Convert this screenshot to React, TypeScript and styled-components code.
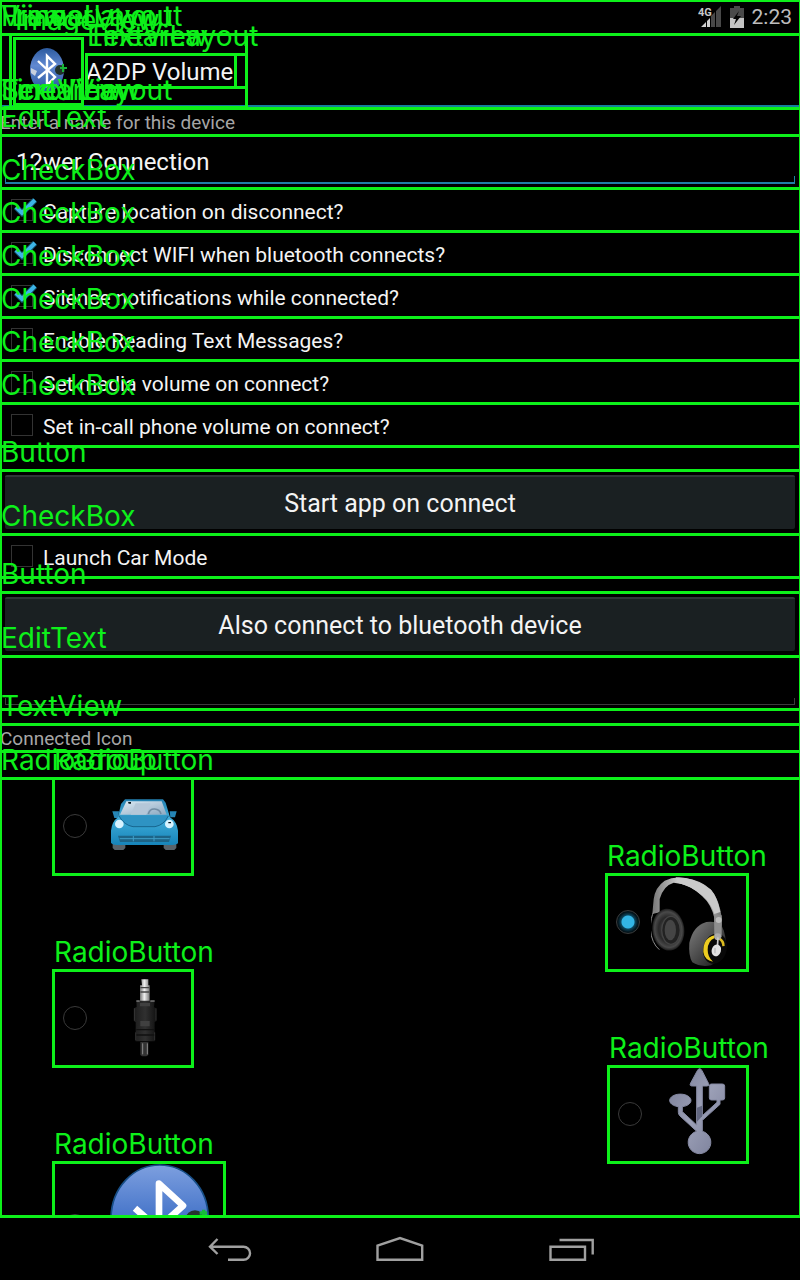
import React, { useState } from "react";
import styled, { createGlobalStyle, css } from "styled-components";

const GREEN = "#0df01a";

const GlobalStyle = createGlobalStyle`
  * { box-sizing: border-box; }
  body { margin: 0; background: #000; color: #f4f4f4; font-family: Roboto, "Liberation Sans", sans-serif; }
  button, input { font-family: inherit; }
`;

const outlined = css`
  position: relative;
  &::after {
    content: "";
    position: absolute;
    inset: -1px -2px -2px -1px;
    border: 3px solid ${GREEN};
    pointer-events: none;
    z-index: 2;
  }
`;

const Tag = styled.span`
  position: absolute;
  left: 1px;
  bottom: calc(100% + 4px);
  z-index: 3;
  color: ${GREEN};
  font-family: Inter, sans-serif;
  font-size: 28px;
  font-weight: 400;
  line-height: 28px;
  white-space: nowrap;
  pointer-events: none;
`;

const Shell = styled.div`
  display: flex;
  flex-direction: column;
  height: 100vh;
  min-height: 640px;
`;

const Screen = styled.div`
  ${outlined}
  flex: 1;
  min-height: 0;
  overflow: hidden;
  &::after { inset: -1px -2px 0 -1px; }
`;

const StatusBar = styled.header`
  display: flex;
  justify-content: flex-end;
  align-items: center;
  gap: 8px;
  height: 34px;
  padding-right: 8px;
  color: #bdbdbd;
`;

const Clock = styled.time`
  font-size: 21px;
  line-height: 36px;
`;

const ActionBar = styled.div`
  ${outlined}
  height: 74px;
  padding-left: 10px;
  box-shadow: inset 0 -3px #14809c;
`;

const HomeBlock = styled.div`
  ${outlined}
  display: inline-flex;
  align-items: center;
  height: 73px;
  padding-left: 4px;
`;

const AppIcon = styled.div`
  ${outlined}
  width: 68px;
  height: 66px;
  margin-right: 4px;
  svg { display: block; }
`;

const TitleColumn = styled.div`
  ${outlined}
  width: 160px;
  height: 33px;
`;

const Title = styled.h1`
  ${outlined}
  margin: 0;
  width: 149px;
  height: 33px;
  font-size: 24px;
  font-weight: 400;
  line-height: 36px;
  white-space: nowrap;
`;

const Form = styled.form`
  ${outlined}
  display: flex;
  flex-direction: column;
`;

const Caption = styled.label`
  ${outlined}
  display: block;
  height: 27px;
  color: #a6a6a6;
  font-size: 19px;
  line-height: 30px;
`;

const Field = styled.div<{ $active?: boolean }>`
  ${outlined}
  height: 53px;
  &::before {
    content: "";
    position: absolute;
    left: 5px;
    right: 5px;
    bottom: 4px;
    height: 6px;
    border: 1px solid ${(p) => (p.$active ? "#1f7fa6" : "#3c3c3c")};
    border-bottom-width: ${(p) => (p.$active ? 2 : 1)}px;
    border-top: 0;
    pointer-events: none;
  }
`;

const TextBox = styled.input`
  display: block;
  width: 100%;
  height: 52px;
  padding: 2px 16px 0;
  border: 0;
  outline: 0;
  background: transparent;
  color: #f4f4f4;
  font-size: 24px;
`;

const CheckRow = styled.label`
  ${outlined}
  display: flex;
  align-items: center;
  height: 43px;
  padding-left: 11px;
  font-size: 21px;
`;

const CheckInput = styled.input`
  appearance: none;
  width: 22px;
  height: 22px;
  margin: 0 10px 0 0;
  border: 1px solid #333;
`;

const CheckText = styled.span`
  padding-top: 4px;
  line-height: 24px;
`;

const Tick = styled.svg`
  position: absolute;
  left: 11px;
  top: 7px;
  pointer-events: none;
`;

const Gap = styled.div<{ $size: number }>`
  height: ${(p) => p.$size}px;
`;

const ButtonSlot = styled.div`
  ${outlined}
  height: 64px;
  padding: 5px;
`;

const WideButton = styled.button`
  display: block;
  width: 100%;
  height: 54px;
  padding: 0;
  border: 0;
  border-top: 2px solid #303638;
  border-radius: 2px;
  background: #1a2022;
  color: #f4f4f4;
  font-size: 25px;
`;

const RadioGroup = styled.div`
  ${outlined}
  display: flex;
  flex-direction: column;
  padding: 0 53px;
`;

const RadioBox = styled.label<{ $end?: boolean; $width: number }>`
  ${outlined}
  display: flex;
  align-items: center;
  justify-content: space-between;
  align-self: ${(p) => (p.$end ? "flex-end" : "flex-start")};
  width: ${(p) => p.$width}px;
  padding-left: 10px;
  svg { display: block; }
`;

const RadioInput = styled.input`
  appearance: none;
  flex: none;
  width: 24px;
  height: 24px;
  margin: 0;
  border: 1px solid #3a3a3a;
  border-radius: 50%;
  &:checked {
    background: radial-gradient(circle, #33b5e5 0 6px, #0d455c 7px, #04141b 10px);
  }
`;

const NavBar = styled.nav`
  display: flex;
  justify-content: center;
  flex: none;
  height: 62px;
`;

const NavButton = styled.button`
  display: flex;
  align-items: center;
  justify-content: center;
  width: 171px;
  padding: 0;
  border: 0;
  background: transparent;
  color: #a0a0a0;
`;

const SignalIcon = () => (
  <svg width="24" height="24" viewBox="0 0 24 24" aria-label="4G signal">
    <path d="M3 22L8 17V22Z M9 22V16L12 13V22Z" fill="#d0d0d0" />
    <path d="M13 22V11L17 7V22Z M18 22V6L23 1V22Z" fill="#484848" />
    <text x="0" y="11" fontFamily="Roboto" fontSize="11" fontWeight="700" fill="#c8c8c8">4G</text>
  </svg>
);

const BatteryIcon = () => (
  <svg width="14" height="22" viewBox="0 0 14 22" aria-label="Battery charging">
    <path d="M4 0H10V2H14V12H0V2H4Z" fill="#4a4a4a" />
    <path d="M0 12H14V22H0Z" fill="#c4c4c4" />
    <path d="M9 5L3 13H6L4 19L11 10H7Z" fill="#050505" />
  </svg>
);

const AppLogo = () => (
  <svg width="68" height="66" viewBox="14 38 68 66" aria-hidden="true">
    <defs>
      <linearGradient id="appBlue" x1="0" y1="0" x2="0" y2="1">
        <stop offset="0" stopColor="#2c5a9e" />
        <stop offset="0.4" stopColor="#6189d2" />
        <stop offset="1" stopColor="#24529a" />
      </linearGradient>
    </defs>
    <ellipse cx="47" cy="70" rx="17" ry="22" fill="url(#appBlue)" />
    <path d="M31 68L37 71L35 76L31 73Z" fill="#c7d0de" />
    <ellipse cx="60" cy="70" rx="5" ry="5" fill="#23302b" />
    <path d="M38 61L55 77L47 85V56L55 64L38 78" fill="none" stroke="#fff" strokeWidth="2.4" />
    <path d="M60 68H67M63 64V72" stroke="#19b43a" strokeWidth="2" />
  </svg>
);

const CarIcon = () => (
  <svg width="96" height="96" viewBox="291 414 288 288" aria-hidden="true">
    <defs>
      <linearGradient id="carBody" x1="0" y1="0" x2="0" y2="1">
        <stop offset="0" stopColor="#237fb0" />
        <stop offset="0.4" stopColor="#41add9" />
        <stop offset="1" stopColor="#1684b9" />
      </linearGradient>
      <linearGradient id="carGlass" x1="0" y1="0" x2="1" y2="1">
        <stop offset="0" stopColor="#dce9f3" />
        <stop offset="1" stopColor="#8da9c1" />
      </linearGradient>
    </defs>
    <path d="M341 606H379V624L373 630H347L341 624Z M494 606H532V624L526 630H500L494 624Z" fill="#59636a" />
    <path d="M340 514H360L358 534H346Z M512 514H533L528 532H514Z" fill="#2585b5" />
    <path d="M378 478H492L500 488L513 532Q534 545 537 572V610Q530 616 518 615H355Q342 616 336 609V572Q339 544 357 532L366 492Z" fill="url(#carBody)" />
    <path d="M382 484H488L503 524H363Z" fill="url(#carGlass)" />
    <path d="M410 490H455L442 524H395Z" fill="#b5c7d8" />
    <path d="M448 522Q452 506 467 507Q482 508 486 522" fill="none" stroke="#718ca3" strokeWidth="5" />
    <path d="M359 526H509Q496 556 469 560H400Q374 556 359 526Z" fill="#2e93c3" />
    <path d="M360 528Q376 556 402 560H468Q495 555 508 528" fill="none" stroke="#17658f" strokeWidth="3" />
    <circle cx="361" cy="552" r="13" fill="#d8f3ff" />
    <circle cx="511" cy="552" r="13" fill="#d8f3ff" />
    <path d="M357 587H516L510 606H363Z" fill="#1d6487" />
    <path d="M362 596H512M403 588V604M465 588V604" stroke="#3f9ec8" strokeWidth="3" />
    <path d="M387 486H396V491H389Z M508 546H516V550H508Z" fill="#07151d" />
  </svg>
);

const HeadphonesIcon = () => (
  <svg width="96" height="96" viewBox="156 102 288 288" aria-hidden="true">
    <defs>
      <linearGradient id="band" x1="0" y1="0" x2="1" y2="0">
        <stop offset="0" stopColor="#777" />
        <stop offset="0.4" stopColor="#d2d2d2" />
        <stop offset="0.8" stopColor="#b0b0b0" />
        <stop offset="1" stopColor="#777" />
      </linearGradient>
      <radialGradient id="cup">
        <stop offset="0" stopColor="#555" />
        <stop offset="0.6" stopColor="#292929" />
        <stop offset="0.85" stopColor="#494949" />
        <stop offset="1" stopColor="#1b1b1b" />
      </radialGradient>
      <linearGradient id="shell" x1="0" y1="0" x2="1" y2="1">
        <stop offset="0" stopColor="#808080" />
        <stop offset="0.5" stopColor="#4a4a4a" />
        <stop offset="1" stopColor="#111" />
      </linearGradient>
    </defs>
    <path d="M160 222L164 178Q168 142 197 122Q225 108 258 114Q305 120 336 149Q361 177 369 237L367 292L347 290V238Q338 193 309 168Q272 131 224 128Q193 137 182 177V217Z" fill="url(#band)" />
    <path d="M230 112Q290 112 336 149Q356 172 364 216L346 222Q334 186 309 166Q276 138 236 128Z" fill="#cacaca" />
    <path d="M166 212Q154 232 154 268Q158 310 181 329" fill="none" stroke="#8a8a8a" strokeWidth="3" />
    <ellipse cx="208" cy="269" rx="48" ry="63" fill="url(#cup)" transform="rotate(-7 208 269)" />
    <ellipse cx="216" cy="271" rx="28" ry="42" fill="#222" stroke="#444" strokeWidth="4" />
    <ellipse cx="214" cy="270" rx="17" ry="31" fill="#454545" />
    <path d="M322 246Q282 257 271 309Q268 348 280 367Q303 382 336 376Q369 362 380 322Q383 286 368 257Q350 242 322 246Z" fill="url(#shell)" />
    <ellipse cx="348" cy="326" rx="35" ry="46" fill="#080808" transform="rotate(15 348 326)" />
    <path d="M347 286Q312 293 313 336Q317 361 342 365Q326 351 326 329Q326 303 347 294Z" fill="#edcd21" />
    <path d="M361 291Q379 302 377 318L370 319Q369 304 359 299Z" fill="#dcbb20" />
    <path d="M345 226H368V292H346Z" fill="#8e8e8e" />
    <circle cx="359" cy="240" r="9" fill="#bbb" />
    <circle cx="356" cy="290" r="10" fill="#aaa" />
    <path d="M357 292L355 326" stroke="#c8c8c8" strokeWidth="5" />
    <ellipse cx="352" cy="331" rx="14" ry="18" fill="#e2e2e2" transform="rotate(18 352 331)" />
    <path d="M348 324V340" stroke="#bbb" strokeWidth="4" />
  </svg>
);

const JackIcon = () => (
  <svg width="96" height="96" viewBox="171 123 288 288" aria-hidden="true">
    <defs>
      <linearGradient id="metal" x1="0" y1="0" x2="1" y2="0">
        <stop offset="0" stopColor="#777" />
        <stop offset="0.45" stopColor="#f0f0f0" />
        <stop offset="1" stopColor="#777" />
      </linearGradient>
      <linearGradient id="sleeve" x1="0" y1="0" x2="1" y2="0">
        <stop offset="0" stopColor="#1c1c1c" />
        <stop offset="0.5" stopColor="#303030" />
        <stop offset="1" stopColor="#111" />
      </linearGradient>
    </defs>
    <path d="M307 151H328V169H332V216H303V169H309Z" fill="url(#metal)" />
    <path d="M304 176H331M304 189H331" stroke="#444" strokeWidth="4" />
    <path d="M292 215H347L345 235L352 238V276L347 280V337H290V280L285 276V238L293 234Z" fill="url(#sleeve)" />
    <path d="M292 216H302M334 216H347" stroke="#aaa" strokeWidth="3" />
    <path d="M303 222H333V232H303Z M304 276H332V292H304Z" fill="#404040" />
    <path d="M286 238V275M351 238V275M290 310V334M347 310V334" stroke="#444" strokeWidth="2" />
    <path d="M292 302H346M292 318H346" stroke="#111" strokeWidth="4" />
    <path d="M304 339H328V378L322 382H309L304 378Z" fill="#333" />
    <path d="M311 343V376M325 343V376" stroke="#8a8a8a" strokeWidth="3" />
  </svg>
);

const UsbIcon = () => (
  <svg width="96" height="96" viewBox="156 111 288 288" aria-hidden="true">
    <defs>
      <linearGradient id="usb" x1="0" y1="0" x2="1" y2="1">
        <stop offset="0" stopColor="#777b94" />
        <stop offset="0.5" stopColor="#9b9fb6" />
        <stop offset="1" stopColor="#777c97" />
      </linearGradient>
    </defs>
    <path d="M302 119Q306 119 309 125L329 164Q332 171 324 171H310V260L354 220V213H337Q331 213 331 207V171Q331 165 337 165H370Q377 165 377 171V207Q377 213 370 213H363V226L310 274V307A34 34 0 1 1 293 307L243 261Q238 256 238 250V233A32 19 0 1 1 250 233V248L293 288V171H280Q270 171 275 162L295 125Q298 119 302 119Z" fill="url(#usb)" stroke="#8589a2" strokeWidth="3" />
    <path d="M294 236L309 230V262L294 278Z" fill="#626780" />
  </svg>
);

const BluetoothIcon = () => (
  <svg width="128" height="128" viewBox="171 129 384 384" aria-hidden="true">
    <defs>
      <linearGradient id="btBlue" x1="0" y1="0" x2="0" y2="1">
        <stop offset="0" stopColor="#7d9fdf" />
        <stop offset="0.4" stopColor="#4a78cb" />
        <stop offset="1" stopColor="#1f4d9c" />
      </linearGradient>
    </defs>
    <path d="M362 138C440 138 508 205 508 300C508 430 440 500 362 500S216 430 216 300C216 205 285 138 362 138Z" fill="url(#btBlue)" stroke="#174e86" strokeWidth="5" />
    <path d="M288 268L428 390L360 450V194L432 260L288 390" fill="none" stroke="#fff" strokeWidth="20" strokeLinejoin="round" />
    <ellipse cx="468" cy="300" rx="28" ry="26" fill="#26332f" />
    <path d="M494 272V300M482 282H504" stroke="#18b93c" strokeWidth="10" />
  </svg>
);

const BackIcon = () => (
  <svg width="48" height="32" viewBox="205 1233 48 32" fill="none" stroke="currentColor" strokeWidth="2.4" aria-hidden="true">
    <path d="M217.5 1239L210 1246.7L217.5 1254M210 1246.7H243.5A6.5 6.5 0 0 1 243.5 1259.8H228" />
  </svg>
);

const HomeIcon = () => (
  <svg width="48" height="32" viewBox="376 1233 48 32" fill="none" stroke="currentColor" strokeWidth="2.4" aria-hidden="true">
    <path d="M377.5 1259.8V1245.5L400 1238L422.2 1245.5V1259.8Z" />
  </svg>
);

const RecentsIcon = () => (
  <svg width="48" height="32" viewBox="547 1233 48 32" fill="none" stroke="currentColor" strokeWidth="2.4" aria-hidden="true">
    <path d="M550.5 1246.7H585V1259.8H550.5Z M559.5 1240H592.7V1254.5" />
  </svg>
);

const Label = ({ children }: { children: string }) => <Tag aria-hidden="true">{children}</Tag>;

function CheckOption({ text, initial = false }: { text: string; initial?: boolean }) {
  const [on, setOn] = useState(initial);
  return (
    <CheckRow>
      <Label>CheckBox</Label>
      <CheckInput type="checkbox" checked={on} onChange={() => setOn(!on)} />
      {on && (
        <Tick width="28" height="24" viewBox="0 0 28 24" aria-hidden="true">
          <path d="M5 12L11 18L24 5" fill="none" stroke="#0f4d66" strokeWidth="6" />
          <path d="M5 12L11 18L24 5" fill="none" stroke="#3db4e6" strokeWidth="4" />
        </Tick>
      )}
      <CheckText>{text}</CheckText>
    </CheckRow>
  );
}

const ICONS = [
  { id: "Car", icon: <CarIcon />, width: 139, end: false },
  { id: "Headphones", icon: <HeadphonesIcon />, width: 141, end: true },
  { id: "Audio jack", icon: <JackIcon />, width: 139, end: false },
  { id: "USB", icon: <UsbIcon />, width: 139, end: true },
  { id: "Bluetooth", icon: <BluetoothIcon />, width: 171, end: false },
];

export default function App() {
  const [name, setName] = useState("12wer Connection");
  const [device, setDevice] = useState("");
  const [icon, setIcon] = useState("Headphones");

  return (
    <Shell>
      <GlobalStyle />
      <Screen>
        <StatusBar>
          <SignalIcon />
          <BatteryIcon />
          <Clock>2:23</Clock>
        </StatusBar>
        <ActionBar>
          <Label>FrameLayout</Label>
          <Label>View</Label>
          <HomeBlock>
            <Label>LinearLayout</Label>
            <AppIcon>
              <Label>ImageView</Label>
              <AppLogo />
            </AppIcon>
            <TitleColumn>
              <Label>LinearLayout</Label>
              <Title>
                <Label>TextView</Label>
                A2DP Volume
              </Title>
            </TitleColumn>
          </HomeBlock>
        </ActionBar>
        <Form onSubmit={(e) => e.preventDefault()}>
          <Label>LinearLayout</Label>
          <Label>ScrollView</Label>
          <Caption htmlFor="device-name">
            <Label>TextView</Label>
            Enter a name for this device
          </Caption>
          <Field $active>
            <Label>EditText</Label>
            <TextBox id="device-name" value={name} onChange={(e) => setName(e.target.value)} />
          </Field>
          <CheckOption text="Capture location on disconnect?" initial />
          <CheckOption text="Disconnect WIFI when bluetooth connects?" initial />
          <CheckOption text="Silence notifications while connected?" initial />
          <CheckOption text="Enable Reading Text Messages?" />
          <CheckOption text="Set media volume on connect?" />
          <CheckOption text="Set in-call phone volume on connect?" />
          <Gap $size={24} />
          <ButtonSlot>
            <Label>Button</Label>
            <WideButton type="button">Start app on connect</WideButton>
          </ButtonSlot>
          <CheckOption text="Launch Car Mode" />
          <Gap $size={15} />
          <ButtonSlot>
            <Label>Button</Label>
            <WideButton type="button">Also connect to bluetooth device</WideButton>
          </ButtonSlot>
          <Field>
            <Label>EditText</Label>
            <TextBox aria-label="Bluetooth device" value={device} onChange={(e) => setDevice(e.target.value)} />
          </Field>
          <Gap $size={15} />
          <Caption as="div" id="icon-caption">
            <Label>TextView</Label>
            Connected Icon
          </Caption>
          <Gap $size={27} />
          <RadioGroup role="radiogroup" aria-labelledby="icon-caption">
            <Label>RadioGroup</Label>
            {ICONS.map((item) => (
              <RadioBox key={item.id} $width={item.width} $end={item.end}>
                <Label>RadioButton</Label>
                <RadioInput
                  type="radio"
                  name="connected-icon"
                  aria-label={item.id}
                  checked={icon === item.id}
                  onChange={() => setIcon(item.id)}
                />
                {item.icon}
              </RadioBox>
            ))}
          </RadioGroup>
        </Form>
      </Screen>
      <NavBar>
        <NavButton type="button" aria-label="Back"><BackIcon /></NavButton>
        <NavButton type="button" aria-label="Home"><HomeIcon /></NavButton>
        <NavButton type="button" aria-label="Recent apps"><RecentsIcon /></NavButton>
      </NavBar>
    </Shell>
  );
}
